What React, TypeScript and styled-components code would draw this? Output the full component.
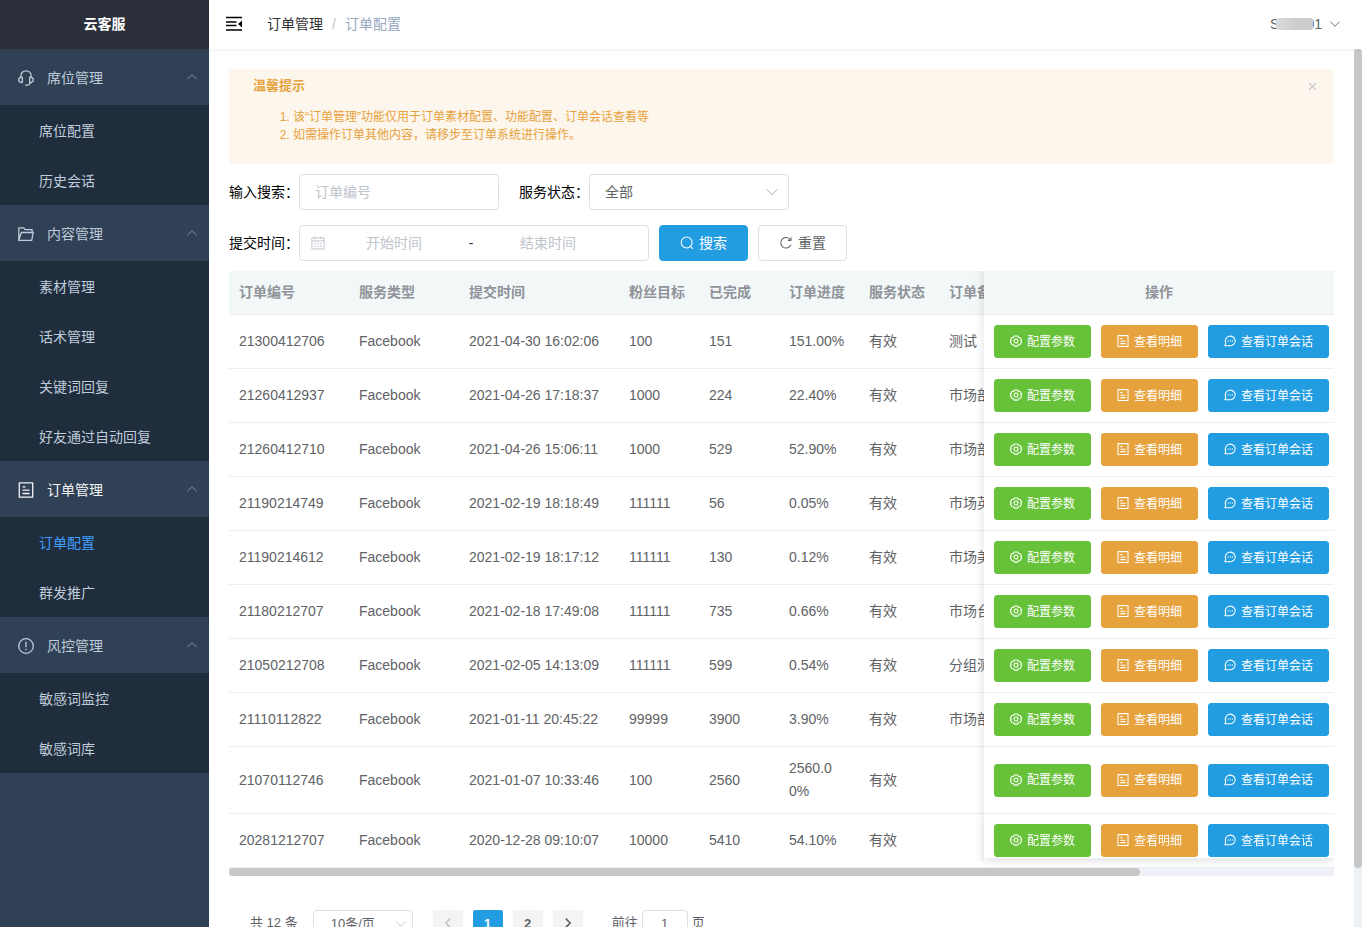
import React, { ReactNode, RefObject, useLayoutEffect, useRef, useState } from 'react';
import styled, { createGlobalStyle, css } from 'styled-components';

const fonts = '"Liberation Sans", "Noto Sans CJK SC", sans-serif';

const GlobalStyle = createGlobalStyle`
  * { box-sizing: border-box; }
  body { margin: 0; font-family: ${fonts}; font-size: 14px; color: #606266; background: #fff; }
  button, input, select { font-family: inherit; }
`;

/* ---------- icons ---------- */

const Svg = styled.svg<{ $size: number }>`
  display: block;
  flex: none;
  width: ${p => p.$size}px;
  height: ${p => p.$size}px;
  fill: none;
  stroke: currentColor;
  stroke-linejoin: round;
`;

type IconName =
  | 'service' | 'folder' | 'tickets' | 'warning' | 'search' | 'refresh' | 'date'
  | 'setting' | 'chat' | 'up' | 'down' | 'left' | 'right' | 'close' | 'fold';

const shapes: Record<IconName, ReactNode> = {
  service: (
    <>
      <path d="M2.900 7.200V5.900C2.900 2.900 5 .8 8 .8s5.100 2.100 5.100 5.100v1.300M12.700 12.400c-.6 1.800-1.900 2.700-3.700 2.700H7.200" />
      <path d="M4.300 7.200v5.300C1.900 12.500.7 11.500.7 9.800s1.200-2.600 3.600-2.600zM11.700 7.200v5.300c2.400 0 3.600-1 3.600-2.700s-1.200-2.600-3.600-2.600z" />
    </>
  ),
  folder: <path d="M.8 14.300V1.800h5l1.300 1.800h7v2.900M.8 14.300h12.900l1.500-7.800H3.300L.8 14.300z" />,
  tickets: (
    <>
      <rect x="1.300" y="0.800" width="13.400" height="14.400" />
      <path d="M4.500 4.800h3M4.500 8.200h7M4.500 11.500h7" />
    </>
  ),
  warning: (
    <>
      <circle cx="8" cy="8" r="7.300" />
      <path d="M8 3.800v5.400M8 10.800v1.500" />
    </>
  ),
  search: (
    <>
      <circle cx="7.600" cy="7.400" r="6.200" />
      <path d="M12 11.800l2.700 2.900" />
    </>
  ),
  refresh: <path d="M13.600 10a6 6 0 1 1-1.200-6.300l1.200 1.300M13.700 1.500V5h-3.500" />,
  date: (
    <>
      <rect x="1" y="2.200" width="14" height="12.600" />
      <path d="M1 5.700h14M4.500 .5v3.200M11.500 .5v3.200M3.800 8.800h2M7 8.800h2M10.200 8.800h2M3.800 11.800h2M7 11.800h2M10.200 11.800h2" />
    </>
  ),
  setting: (
    <>
      <path d="M5.700 1.200h4.600l1 2 2.200.1 2 3.700-1.200 1 1.200 1.200-2 3.600-2.200.1-1 1.900H5.700l-1-1.900-2.200-.1-2-3.600L1.700 8 .5 7l2-3.700 2.200-.1z" />
      <circle cx="8" cy="8" r="2.700" />
    </>
  ),
  chat: (
    <>
      <path d="M1.200 14.300h7.200a6.600 6.400 0 1 0-6.300-4.200c.3.700.3 1.300-.1 1.900z" />
      <path d="M4.600 8h1.700M7.500 8h1.700M10.400 8h1.700" />
    </>
  ),
  up: <path d="M2 11l6-6 6 6" />,
  down: <path d="M2 5l6 6 6-6" />,
  left: <path d="M10.500 3l-5 5 5 5" />,
  right: <path d="M5.500 3l5 5-5 5" />,
  close: <path d="M3 3l10 10M13 3L3 13" />,
  fold: (
    <>
      <path d="M0 1.500h16M0 6h10.500M0 9.500h10.500M0 14h16" />
      <path d="M16 4.500v7L12 8z" fill="currentColor" stroke="none" />
    </>
  ),
};

function Icon({ name, size = 14, weight = 1.2 }: { name: IconName; size?: number; weight?: number }) {
  return (
    <Svg $size={size} viewBox="0 0 16 16" strokeWidth={weight} aria-hidden="true">
      {shapes[name]}
    </Svg>
  );
}

/* ---------- frame ---------- */

const Shell = styled.div`
  display: flex;
  height: 100vh;
`;

const Sidebar = styled.aside`
  flex: none;
  width: 209px;
  background: #304156;
  overflow: hidden;
`;

const Brand = styled.h1`
  margin: 0;
  height: 49px;
  line-height: 48px;
  background: #2b2f3a;
  color: #fff;
  font-size: 14px;
  text-align: center;
`;

const GroupButton = styled.button<{ $current: boolean }>`
  display: flex;
  align-items: center;
  gap: 13px;
  width: 100%;
  height: 56px;
  padding: 2px 11px 0 18px;
  border: 0;
  background: #304156;
  color: ${p => (p.$current ? '#f4f4f5' : '#bfcbd9')};
  font-size: 14px;
  text-align: left;
`;

const GroupLabel = styled.span`
  flex: 1;
  padding-bottom: 2px;
`;

const Caret = styled.span`
  padding-bottom: 3px;
  color: #909399;
`;

const SubList = styled.ul`
  margin: 0;
  padding: 0;
  list-style: none;
  background: #1f2d3d;
`;

const SubLink = styled.a<{ $current: boolean }>`
  display: block;
  height: 50px;
  line-height: 52px;
  padding-left: 39px;
  color: ${p => (p.$current ? '#409eff' : '#bfcbd9')};
  text-decoration: none;
`;

const Page = styled.div`
  flex: 1;
  min-width: 0;
  display: flex;
  flex-direction: column;
`;

const TopBar = styled.header`
  flex: none;
  display: flex;
  align-items: center;
  height: 49px;
  padding: 0 21px 2px 17px;
  position: relative;
  z-index: 5;
  background: #fff;
  box-shadow: 0 1px 4px rgba(0, 21, 41, 0.08);
`;

const PlainButton = styled.button`
  display: flex;
  align-items: center;
  padding: 0;
  border: 0;
  background: none;
  color: inherit;
  font-size: 14px;
`;

const FoldButton = styled(PlainButton)`
  color: #000;
`;

const Crumbs = styled.nav`
  display: flex;
  align-items: baseline;
  flex: 1;
  gap: 9px;
  margin-left: 25px;
  line-height: 20px;
  color: #97a8be;
`;

const CrumbLink = styled.a`
  color: #303133;
  text-decoration: none;
`;

const CrumbSlash = styled.span`
  color: #c0c4cc;
`;

const Mask = styled.span`
  width: 37px;
  height: 12px;
  margin: 0 -7px 0 -3px;
  border-radius: 3px;
  background: linear-gradient(90deg, #d9dadc, #cfcfce 50%, #c9cbce);
  z-index: 1;
`;

const UserCaret = styled.span`
  margin-left: 7px;
`;

const Body = styled.div`
  flex: 1;
  min-height: 0;
  display: flex;
`;

const Scroller = styled.main`
  flex: 1;
  min-width: 0;
  overflow-y: auto;
  scrollbar-width: none;
  padding: 20px;
`;

/* ---------- scroll bars ---------- */

const VTrack = styled.div`
  flex: none;
  width: 8px;
  background: #eef1f6;
`;

const HTrack = styled.div`
  height: 8px;
  background: #eef1f6;
`;

const Thumb = styled.div`
  width: 100%;
  height: 100%;
  border-radius: 4px;
  background: #c6c7c9;
`;

function useScroll(ref: RefObject<HTMLElement | null>) {
  const [m, setM] = useState({ w: 1, h: 1, x: 0, y: 0 });
  useLayoutEffect(() => {
    const el = ref.current;
    if (!el) return;
    const read = () =>
      setM({
        w: el.clientWidth / el.scrollWidth,
        h: el.clientHeight / el.scrollHeight,
        x: el.scrollLeft / el.clientWidth,
        y: el.scrollTop / el.clientHeight,
      });
    read();
    const watcher = new ResizeObserver(read);
    watcher.observe(el);
    Array.from(el.children).forEach(c => watcher.observe(c));
    el.addEventListener('scroll', read);
    return () => {
      watcher.disconnect();
      el.removeEventListener('scroll', read);
    };
  }, [ref]);
  return m;
}

/* ---------- notice ---------- */

const Notice = styled.section`
  display: flex;
  align-items: flex-start;
  justify-content: space-between;
  min-height: 95px;
  padding: 8px 16px 8px 24px;
  border-radius: 4px;
  background: #fdf6ec;
  color: #e6a23c;
`;

const NoticeTitle = styled.h2`
  margin: 0 0 13px;
  font-size: 13px;
  line-height: 18px;
`;

const NoticeList = styled.ol`
  margin: 0;
  padding-left: 40px;
  font-size: 12px;
  line-height: 18px;
`;

const NoticeClose = styled(PlainButton)`
  height: 18px;
  color: #c0c4cc;
`;

/* ---------- filters ---------- */

const Filters = styled.form`
  display: flex;
  flex-direction: column;
  gap: 15px;
  padding: 10px 0;
`;

const FilterRow = styled.div`
  display: flex;
  align-items: center;
  gap: 10px;
`;

const Field = styled.div`
  display: flex;
  align-items: center;
  & + & { margin-left: 10px; }
`;

const FieldLabel = styled.label`
  padding-bottom: 2px;
  color: #000;
`;

const box = css`
  border: 1px solid #dcdfe6;
  border-radius: 4px;
  background: #fff;
  color: #606266;
  outline: none;
`;

const TextInput = styled.input`
  ${box}
  width: 200px;
  height: 36px;
  padding: 0 15px;
  font-size: 14px;
  &::placeholder { color: #c0c4cc; }
`;

const SelectWrap = styled.div<{ $small?: boolean }>`
  position: relative;
  width: ${p => (p.$small ? 100 : 200)}px;
`;

const Select = styled.select<{ $small?: boolean }>`
  ${box}
  display: block;
  appearance: none;
  width: 100%;
  height: ${p => (p.$small ? 28 : 36)}px;
  padding: ${p => (p.$small ? '0 17px 2px' : '0 15px')};
  font-size: ${p => (p.$small ? 13 : 14)}px;
`;

const SelectCaret = styled.span<{ $small?: boolean }>`
  position: absolute;
  top: 0;
  bottom: 0;
  right: ${p => (p.$small ? 6 : 10)}px;
  display: flex;
  align-items: center;
  color: #c0c4cc;
  pointer-events: none;
`;

const Range = styled.div`
  ${box}
  display: grid;
  grid-template-columns: 20px 1fr 26px 1fr 26px;
  align-items: center;
  width: 350px;
  height: 36px;
  padding: 0 10px;
`;

const RangeIcon = styled.span`
  padding-left: 1px;
  color: #c0c4cc;
`;

const RangeInput = styled.input`
  width: 100%;
  padding: 0;
  border: 0;
  outline: none;
  font-size: 14px;
  text-align: center;
  color: #606266;
  &::placeholder { color: #c0c4cc; }
`;

const RangeDash = styled.span`
  color: #303133;
  text-align: center;
`;

const tones = {
  primary: '#229de1',
  success: '#67c23a',
  warning: '#e6a23c',
};

const Button = styled.button<{ $tone?: keyof typeof tones; $small?: boolean }>`
  display: inline-flex;
  align-items: center;
  justify-content: center;
  gap: 5px;
  height: ${p => (p.$small ? 33 : 36)}px;
  padding: 0 ${p => (p.$small ? 15 : 20)}px 1px;
  border: 1px solid ${p => (p.$tone ? tones[p.$tone] : '#dcdfe6')};
  border-radius: ${p => (p.$small ? 3 : 4)}px;
  background: ${p => (p.$tone ? tones[p.$tone] : '#fff')};
  color: ${p => (p.$tone ? '#fff' : '#606266')};
  font-size: ${p => (p.$small ? 12 : 14)}px;
  white-space: nowrap;
`;

const ButtonText = styled.span`
  padding-bottom: 2px;
`;

/* ---------- table ---------- */

const TableScroll = styled.div`
  overflow-x: auto;
  scrollbar-width: none;
`;

const Table = styled.table`
  width: 100%;
  min-width: 1340px;
  table-layout: fixed;
  border-collapse: separate;
  border-spacing: 0;
`;

const Col = styled.col<{ $w?: number }>`
  width: ${p => (p.$w ? `${p.$w}px` : 'auto')};
`;

const Th = styled.th`
  padding: 10px;
  border-bottom: 1px solid #ebeef5;
  background: #f2f8f8;
  color: #909399;
  font-size: 14px;
  line-height: 23px;
  text-align: left;
  white-space: nowrap;
`;

const Td = styled.td`
  padding: 10px;
  border-bottom: 1px solid #ebeef5;
  line-height: 23px;
  word-break: break-all;
`;

const pinned = css`
  position: sticky;
  right: 0;
  z-index: 2;
  &::before {
    content: '';
    position: absolute;
    inset: 0;
    z-index: -1;
  }
  &::after {
    content: '';
    position: absolute;
    top: 0;
    bottom: -1px;
    left: -10px;
    width: 10px;
    background: linear-gradient(to left, rgba(0, 0, 0, 0.06), rgba(0, 0, 0, 0.02) 50%, transparent);
  }
`;

const PinnedTh = styled(Th)`
  ${pinned}
  text-align: center;
  &::before { background: #f2f8f8; }
`;

const PinnedTd = styled(Td)`
  ${pinned}
  &::before { background: #fff; }
  tr:last-child > &::before {
    bottom: 8px;
    border-bottom: 1px solid #ebeef5;
    box-shadow: 0 4px 8px -2px rgba(0, 0, 0, 0.12);
  }
  tr:last-child > &::after {
    bottom: 6px;
  }
`;

const Actions = styled.div`
  display: flex;
  gap: 10px;
`;

/* ---------- pagination ---------- */

const Pager = styled.nav`
  display: flex;
  align-items: center;
  padding: 34px 20px 32px 21px;
  font-size: 13px;
  line-height: 24px;
`;

const PagerText = styled.span`
  padding-bottom: 2px;
`;

const SizePick = styled.div`
  margin: 0 20px 0 15px;
`;

const PageButtons = styled.div`
  display: flex;
  gap: 10px;
`;

const PageButton = styled.button<{ $current?: boolean }>`
  display: flex;
  align-items: center;
  justify-content: center;
  width: 30px;
  height: 28px;
  padding: 0 0 2px;
  border: 0;
  border-radius: 2px;
  background: ${p => (p.$current ? '#229de1' : '#f4f4f5')};
  color: ${p => (p.$current ? '#fff' : '#606266')};
  font-size: 13px;
  font-weight: 700;
  &:disabled { color: #c0c4cc; }
`;

const Jump = styled.label`
  display: flex;
  align-items: center;
  gap: 4px;
  margin-left: 29px;
`;

const JumpInput = styled.input`
  ${box}
  width: 46px;
  height: 28px;
  padding: 0 0 2px;
  font-size: 13px;
  text-align: center;
`;

/* ---------- data ---------- */

const menu: { icon: IconName; label: string; items: string[] }[] = [
  { icon: 'service', label: '席位管理', items: ['席位配置', '历史会话'] },
  { icon: 'folder', label: '内容管理', items: ['素材管理', '话术管理', '关键词回复', '好友通过自动回复'] },
  { icon: 'tickets', label: '订单管理', items: ['订单配置', '群发推广'] },
  { icon: 'warning', label: '风控管理', items: ['敏感词监控', '敏感词库'] },
];

const columns = ['订单编号', '服务类型', '提交时间', '粉丝目标', '已完成', '订单进度', '服务状态', '订单备注'];
const widths = [120, 110, 160, 80, 80, 80, 80];

const orders = [
  ['21300412706', 'Facebook', '2021-04-30 16:02:06', '100', '151', '151.00%', '有效', '测试'],
  ['21260412937', 'Facebook', '2021-04-26 17:18:37', '1000', '224', '22.40%', '有效', '市场部'],
  ['21260412710', 'Facebook', '2021-04-26 15:06:11', '1000', '529', '52.90%', '有效', '市场部'],
  ['21190214749', 'Facebook', '2021-02-19 18:18:49', '111111', '56', '0.05%', '有效', '市场英'],
  ['21190214612', 'Facebook', '2021-02-19 18:17:12', '111111', '130', '0.12%', '有效', '市场美'],
  ['21180212707', 'Facebook', '2021-02-18 17:49:08', '111111', '735', '0.66%', '有效', '市场台'],
  ['21050212708', 'Facebook', '2021-02-05 14:13:09', '111111', '599', '0.54%', '有效', '分组测'],
  ['21110112822', 'Facebook', '2021-01-11 20:45:22', '99999', '3900', '3.90%', '有效', '市场部'],
  ['21070112746', 'Facebook', '2021-01-07 10:33:46', '100', '2560', '2560.00%', '有效', ''],
  ['20281212707', 'Facebook', '2020-12-28 09:10:07', '10000', '5410', '54.10%', '有效', ''],
];

/* ---------- sections ---------- */

function SideMenu() {
  return (
    <Sidebar>
      <Brand>云客服</Brand>
      <nav>
        {menu.map(group => (
          <div key={group.label}>
            <GroupButton type="button" aria-expanded="true" $current={group.label === '订单管理'}>
              <Icon name={group.icon} size={16} weight={1.3} />
              <GroupLabel>{group.label}</GroupLabel>
              <Caret><Icon name="up" size={12} weight={1.2} /></Caret>
            </GroupButton>
            <SubList>
              {group.items.map(item => (
                <li key={item}>
                  <SubLink href="#" $current={item === '订单配置'}>{item}</SubLink>
                </li>
              ))}
            </SubList>
          </div>
        ))}
      </nav>
    </Sidebar>
  );
}

function SearchForm() {
  return (
    <Filters onSubmit={e => e.preventDefault()}>
      <FilterRow>
        <Field>
          <FieldLabel htmlFor="keyword">输入搜索：</FieldLabel>
          <TextInput id="keyword" placeholder="订单编号" />
        </Field>
        <Field>
          <FieldLabel htmlFor="status">服务状态：</FieldLabel>
          <SelectWrap>
            <Select id="status"><option>全部</option></Select>
            <SelectCaret><Icon name="down" /></SelectCaret>
          </SelectWrap>
        </Field>
      </FilterRow>
      <FilterRow>
        <Field>
          <FieldLabel htmlFor="from">提交时间：</FieldLabel>
          <Range>
            <RangeIcon><Icon name="date" size={14} weight={1.1} /></RangeIcon>
            <RangeInput id="from" placeholder="开始时间" />
            <RangeDash>-</RangeDash>
            <RangeInput aria-label="结束时间" placeholder="结束时间" />
          </Range>
        </Field>
        <Button type="submit" $tone="primary"><Icon name="search" /><ButtonText>搜索</ButtonText></Button>
        <Button type="reset"><Icon name="refresh" /><ButtonText>重置</ButtonText></Button>
      </FilterRow>
    </Filters>
  );
}

function RowAction({ tone, icon, label }: { tone: keyof typeof tones; icon: IconName; label: string }) {
  return (
    <Button type="button" $small $tone={tone}>
      <Icon name={icon} size={12} weight={1.4} />
      <ButtonText>{label}</ButtonText>
    </Button>
  );
}

function OrderTable() {
  const ref = useRef<HTMLDivElement>(null);
  const m = useScroll(ref);
  return (
    <div>
      <TableScroll ref={ref}>
        <Table>
          <colgroup>
            {widths.map((w, i) => <Col key={i} $w={w} />)}
            <Col />
            <Col $w={350} />
          </colgroup>
          <thead>
            <tr>
              {columns.map(c => <Th key={c} scope="col">{c}</Th>)}
              <PinnedTh scope="col">操作</PinnedTh>
            </tr>
          </thead>
          <tbody>
            {orders.map(row => (
              <tr key={row[0]}>
                {row.map((value, i) => <Td key={i}>{value}</Td>)}
                <PinnedTd>
                  <Actions>
                    <RowAction tone="success" icon="setting" label="配置参数" />
                    <RowAction tone="warning" icon="tickets" label="查看明细" />
                    <RowAction tone="primary" icon="chat" label="查看订单会话" />
                  </Actions>
                </PinnedTd>
              </tr>
            ))}
          </tbody>
        </Table>
      </TableScroll>
      <HTrack>
        <Thumb style={{ width: `${m.w * 100}%`, transform: `translateX(${m.x * 100}%)` }} />
      </HTrack>
    </div>
  );
}

function Pagination() {
  return (
    <Pager aria-label="分页">
      <PagerText>共 12 条</PagerText>
      <SizePick>
        <SelectWrap $small>
          <Select $small aria-label="每页条数"><option>10条/页</option></Select>
          <SelectCaret $small><Icon name="down" size={12} /></SelectCaret>
        </SelectWrap>
      </SizePick>
      <PageButtons>
        <PageButton type="button" disabled aria-label="上一页"><Icon name="left" size={14} weight={2} /></PageButton>
        <PageButton type="button" $current>1</PageButton>
        <PageButton type="button">2</PageButton>
        <PageButton type="button" aria-label="下一页"><Icon name="right" size={14} weight={2} /></PageButton>
      </PageButtons>
      <Jump>
        <PagerText>前往</PagerText>
        <JumpInput defaultValue="1" />
        <PagerText>页</PagerText>
      </Jump>
    </Pager>
  );
}

export default function App() {
  const ref = useRef<HTMLElement>(null);
  const m = useScroll(ref);
  return (
    <>
      <GlobalStyle />
      <Shell>
        <SideMenu />
        <Page>
          <TopBar>
            <FoldButton type="button" aria-label="收起菜单"><Icon name="fold" size={16} weight={1.5} /></FoldButton>
            <Crumbs>
              <CrumbLink href="#">订单管理</CrumbLink>
              <CrumbSlash>/</CrumbSlash>
              <span>订单配置</span>
            </Crumbs>
            <PlainButton type="button">
              <span>S</span>
              <Mask />
              <span>01</span>
              <UserCaret><Icon name="down" size={12} /></UserCaret>
            </PlainButton>
          </TopBar>
          <Body>
            <Scroller ref={ref}>
              <Notice>
                <div>
                  <NoticeTitle>温馨提示</NoticeTitle>
                  <NoticeList>
                    <li>该“订单管理”功能仅用于订单素材配置、功能配置、订单会话查看等</li>
                    <li>如需操作订单其他内容，请移步至订单系统进行操作。</li>
                  </NoticeList>
                </div>
                <NoticeClose type="button" aria-label="关闭"><Icon name="close" size={11} weight={1.6} /></NoticeClose>
              </Notice>
              <SearchForm />
              <OrderTable />
              <Pagination />
            </Scroller>
            <VTrack>
              <Thumb style={{ height: `${m.h * 100}%`, transform: `translateY(${m.y * 100}%)` }} />
            </VTrack>
          </Body>
        </Page>
      </Shell>
    </>
  );
}
